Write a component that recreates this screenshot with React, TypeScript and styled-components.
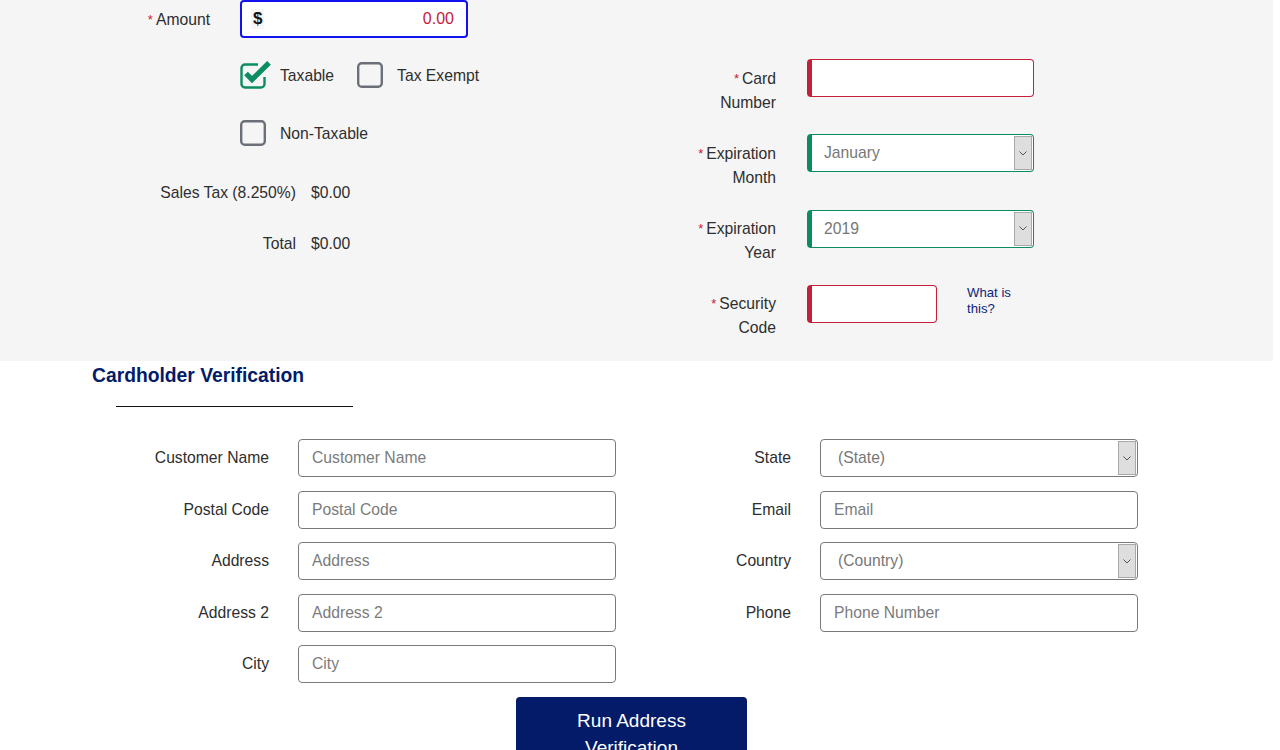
import React from 'react';
import styled, { createGlobalStyle } from 'styled-components';

const GlobalStyle = createGlobalStyle`
  body {
    margin: 0;
    background: #ffffff;
    font-family: 'Liberation Sans', Arial, sans-serif;
    color: #2e2e2e;
  }
`;

const NAVY = '#031b68';
const RED = '#c5203a';
const GREEN = '#0b8c62';

const Page = styled.div`
  width: 1273px;
  font-size: 15.7px;
`;

const PaymentBand = styled.section`
  display: flex;
  background: #f5f5f5;
  height: 361px;
`;

const LeftPane = styled.div`
  flex: 0 0 686px;
  display: flex;
  flex-direction: column;
`;

const RightPane = styled.div`
  display: flex;
  flex-direction: column;
  gap: 19.8px;
  padding-top: 59px;
`;

const Required = styled.span`
  color: ${RED};
  font-size: 13px;
  line-height: 1;
  margin-right: 3px;
  vertical-align: 1px;
`;

const AmountRow = styled.div`
  display: flex;
  align-items: center;
  gap: 30px;
  height: 38px;
`;

const AmountLabel = styled.label`
  width: 210px;
  text-align: right;
  padding-top: 2px;
`;

const AmountBox = styled.div`
  box-sizing: border-box;
  width: 228px;
  height: 38px;
  border: 2px solid #1212f0;
  border-radius: 4px;
  background: #fff;
  display: flex;
  align-items: center;
  padding: 0 12px 0 9px;
`;

const Dollar = styled.span`
  font-weight: bold;
  font-size: 17px;
  color: #111;
  background: #f6f6f6;
  padding: 0 2px;
`;

const AmountValue = styled.input`
  flex: 1;
  min-width: 0;
  border: none;
  outline: none;
  text-align: right;
  color: ${RED};
  font: inherit;
  font-size: 16px;
  background: transparent;
  padding: 0;
`;

const Options = styled.div`
  margin: 24px 0 0 240px;
  display: flex;
  flex-direction: column;
  gap: 32px;
`;

const OptionRow = styled.div`
  display: flex;
  align-items: center;
  gap: 23px;
`;

const Option = styled.label<{ $tight?: boolean }>`
  display: flex;
  align-items: center;
  gap: ${(p) => (p.$tight ? 8 : 14)}px;
  height: 26px;
`;

const OptionText = styled.span`
  padding-top: 2px;
`;

const BoxIcon = styled.svg`
  flex: 0 0 auto;
`;

const Totals = styled.div`
  margin-top: 35px;
  display: flex;
  flex-direction: column;
  gap: 27px;
`;

const TotalRow = styled.div`
  display: flex;
  gap: 15px;
  line-height: 24px;
`;

const TotalLabel = styled.span`
  width: 296px;
  text-align: right;
`;

const FieldRow = styled.div`
  display: flex;
  align-items: flex-start;
  gap: 31px;
`;

const FieldLabel = styled.label`
  width: 90px;
  text-align: right;
  line-height: 24px;
  padding-top: 7.5px;
`;

const StatusInput = styled.input<{ $tone: string; $w: number }>`
  box-sizing: border-box;
  width: ${(p) => p.$w}px;
  height: 38px;
  border: 1px solid ${(p) => p.$tone};
  border-left-width: 5px;
  border-radius: 4px;
  background: #fff;
  outline: none;
  font: inherit;
  padding: 0 12px;
`;

const SelectBox = styled.div<{ $tone?: string; $w: number }>`
  box-sizing: border-box;
  width: ${(p) => p.$w}px;
  height: 38px;
  display: flex;
  border: 1px solid ${(p) => p.$tone || '#7a7a7a'};
  border-left-width: ${(p) => (p.$tone ? 5 : 1)}px;
  border-radius: 4px;
  background: #fff;
  overflow: hidden;
`;

const SelectText = styled.span<{ $pad: number }>`
  flex: 1;
  display: flex;
  align-items: center;
  padding-left: ${(p) => p.$pad}px;
  color: #777;
`;

const ArrowBox = styled.span`
  flex: 0 0 16px;
  margin: 1px;
  background: #dedede;
  border: 1px solid #a9a9a9;
  display: flex;
  align-items: center;
  justify-content: center;
`;

const HelpLink = styled.a`
  margin-left: -1px;
  font-size: 13.2px;
  line-height: 16px;
  color: #0b1f7a;
  text-decoration: none;
  width: 60px;
`;

const Verification = styled.section`
  padding-top: 4px;
`;

const Heading = styled.h2`
  margin: 0 0 0 92px;
  font-size: 19.3px;
  line-height: 22px;
  font-weight: bold;
  color: ${NAVY};
`;

const Rule = styled.hr`
  margin: 19px 0 0 116px;
  width: 237px;
  border: none;
  border-top: 1px solid #111;
`;

const FormColumns = styled.div`
  margin: 32px 0 0 119px;
  display: flex;
  gap: 25px;
`;

const FormColumn = styled.div`
  display: grid;
  grid-template-columns: 150px 318px;
  column-gap: 29px;
  row-gap: 13.5px;
  align-items: center;
  align-content: start;
`;

const FormLabel = styled.label`
  text-align: right;
`;

const TextInput = styled.input`
  box-sizing: border-box;
  height: 38px;
  width: 318px;
  border: 1px solid #7a7a7a;
  border-radius: 4px;
  padding: 0 13px;
  font: inherit;
  color: #333;
  outline: none;

  &::placeholder {
    color: #7b7b7b;
  }
`;

const ButtonRow = styled.div`
  margin: 14px 0 0 516px;
`;

const RunButton = styled.button`
  width: 231px;
  background: ${NAVY};
  color: #fff;
  border: none;
  border-radius: 4px;
  font-family: inherit;
  font-size: 19px;
  line-height: 27px;
  padding: 10px 16px;
`;

const Chevron = () => (
  <svg width="8" height="5" viewBox="0 0 8 5">
    <polyline points="0.5,0.5 4,4 7.5,0.5" fill="none" stroke="#555" strokeWidth="1" />
  </svg>
);

const CheckedBox = () => (
  <BoxIcon width="32" height="28" viewBox="0 0 32 28">
    <path
      d="M18 3.5 H5 a3.5 3.5 0 0 0 -3.5 3.5 V23 a3.5 3.5 0 0 0 3.5 3.5 H21 a3.5 3.5 0 0 0 3.5 -3.5 V16"
      fill="none"
      stroke={GREEN}
      strokeWidth="2.4"
    />
    <polyline
      points="6,12.5 12,18.5 29,1.8"
      fill="none"
      stroke={GREEN}
      strokeWidth="5.2"
      strokeLinejoin="miter"
    />
  </BoxIcon>
);

const EmptyBox = () => (
  <BoxIcon width="26" height="26" viewBox="0 0 26 26">
    <rect x="1.2" y="1.2" width="23.6" height="23.6" rx="3.5" fill="none" stroke="#6b7078" strokeWidth="2.4" />
  </BoxIcon>
);

const Select: React.FC<{ value: string; width: number; tone?: string; pad: number }> = ({
  value,
  width,
  tone,
  pad,
}) => (
  <SelectBox $w={width} $tone={tone}>
    <SelectText $pad={pad}>{value}</SelectText>
    <ArrowBox>
      <Chevron />
    </ArrowBox>
  </SelectBox>
);

const leftFields = ['Customer Name', 'Postal Code', 'Address', 'Address 2', 'City'];

export default function App() {
  return (
    <Page>
      <GlobalStyle />
      <PaymentBand>
        <LeftPane>
          <AmountRow>
            <AmountLabel>
              <Required>*</Required>Amount
            </AmountLabel>
            <AmountBox>
              <Dollar>$</Dollar>
              <AmountValue defaultValue="0.00" />
            </AmountBox>
          </AmountRow>

          <Options>
            <OptionRow>
              <Option $tight>
                <CheckedBox />
                <OptionText>Taxable</OptionText>
              </Option>
              <Option>
                <EmptyBox />
                <OptionText>Tax Exempt</OptionText>
              </Option>
            </OptionRow>
            <OptionRow>
              <Option>
                <EmptyBox />
                <OptionText>Non-Taxable</OptionText>
              </Option>
            </OptionRow>
          </Options>

          <Totals>
            <TotalRow>
              <TotalLabel>Sales Tax (8.250%)</TotalLabel>
              <span>$0.00</span>
            </TotalRow>
            <TotalRow>
              <TotalLabel>Total</TotalLabel>
              <span>$0.00</span>
            </TotalRow>
          </Totals>
        </LeftPane>

        <RightPane>
          <FieldRow>
            <FieldLabel>
              <Required>*</Required>Card Number
            </FieldLabel>
            <StatusInput $tone={RED} $w={227} />
          </FieldRow>
          <FieldRow>
            <FieldLabel>
              <Required>*</Required>Expiration Month
            </FieldLabel>
            <Select value="January" width={227} tone={GREEN} pad={12} />
          </FieldRow>
          <FieldRow>
            <FieldLabel>
              <Required>*</Required>Expiration Year
            </FieldLabel>
            <Select value="2019" width={227} tone={GREEN} pad={12} />
          </FieldRow>
          <FieldRow>
            <FieldLabel>
              <Required>*</Required>Security Code
            </FieldLabel>
            <StatusInput $tone={RED} $w={130} />
            <HelpLink href="#">What is this?</HelpLink>
          </FieldRow>
        </RightPane>
      </PaymentBand>

      <Verification>
        <Heading>Cardholder Verification</Heading>
        <Rule />
        <FormColumns>
          <FormColumn>
            {leftFields.map((f) => (
              <React.Fragment key={f}>
                <FormLabel>{f}</FormLabel>
                <TextInput placeholder={f} />
              </React.Fragment>
            ))}
          </FormColumn>
          <FormColumn>
            <FormLabel>State</FormLabel>
            <Select value="(State)" width={318} pad={17} />
            <FormLabel>Email</FormLabel>
            <TextInput placeholder="Email" />
            <FormLabel>Country</FormLabel>
            <Select value="(Country)" width={318} pad={17} />
            <FormLabel>Phone</FormLabel>
            <TextInput placeholder="Phone Number" />
          </FormColumn>
        </FormColumns>
        <ButtonRow>
          <RunButton>Run Address Verification</RunButton>
        </ButtonRow>
      </Verification>
    </Page>
  );
}
